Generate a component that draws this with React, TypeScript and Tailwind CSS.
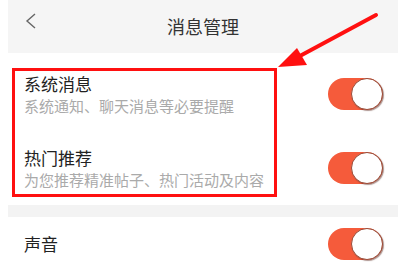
import React from 'react';

const font = { fontFamily: '"Noto Sans CJK SC", "Noto Sans", sans-serif' };

function Toggle() {
  return (
    <div className="relative h-[32px] w-[55px] rounded-full bg-[#f55b3b]">
      <div className="absolute right-0 top-0 h-[32px] w-[32px] rounded-full border border-[#9a4a36] bg-white shadow-[1px_1px_1px_rgba(90,40,30,0.5)]" />
    </div>
  );
}

function Row({ title, sub }: { title: string; sub?: string }) {
  return (
    <div className="flex h-[74px] items-center justify-between pl-[16px] pr-[15px]">
      <div className="flex flex-col">
        <span className="text-[17px] leading-[22px] text-[#222]">{title}</span>
        {sub && <span className="mt-[1px] text-[15px] leading-[20px] text-[#aaa]">{sub}</span>}
      </div>
      <Toggle />
    </div>
  );
}

export default function App() {
  return (
    <div className="relative h-[264px] w-[398px] overflow-hidden bg-white pl-[8px]" style={font}>
      <div className="relative flex h-[53px] items-center justify-center bg-[#f5f5f5]">
        <svg className="absolute left-[17px] top-[13px]" width="12" height="16" viewBox="0 0 12 16">
          <polyline points="10,1 2,8 10,15" fill="none" stroke="#666" strokeWidth="1.4" />
        </svg>
        <span className="text-[18px] text-[#333]">消息管理</span>
      </div>
      <div className="pt-[4px]">
        <Row title="系统消息" sub="系统通知、聊天消息等必要提醒" />
        <Row title="热门推荐" sub="为您推荐精准帖子、热门活动及内容" />
      </div>
      <div className="h-[12px] bg-[#f3f3f3]" />
      <div className="flex h-[54px] items-center justify-between pl-[16px] pr-[15px]">
        <span className="text-[17px] text-[#222]">声音</span>
        <Toggle />
      </div>

      <div className="pointer-events-none absolute left-[12px] top-[68px] h-[129px] w-[265px] border-[3px] border-[#ff1010]" />
      <svg className="pointer-events-none absolute left-0 top-0" width="398" height="264">
        <line x1="376" y1="15" x2="298" y2="57" stroke="#ff1010" strokeWidth="4" strokeLinecap="round" />
        <polygon points="278,67 297,48 307,65" fill="#ff1010" />
      </svg>
    </div>
  );
}
